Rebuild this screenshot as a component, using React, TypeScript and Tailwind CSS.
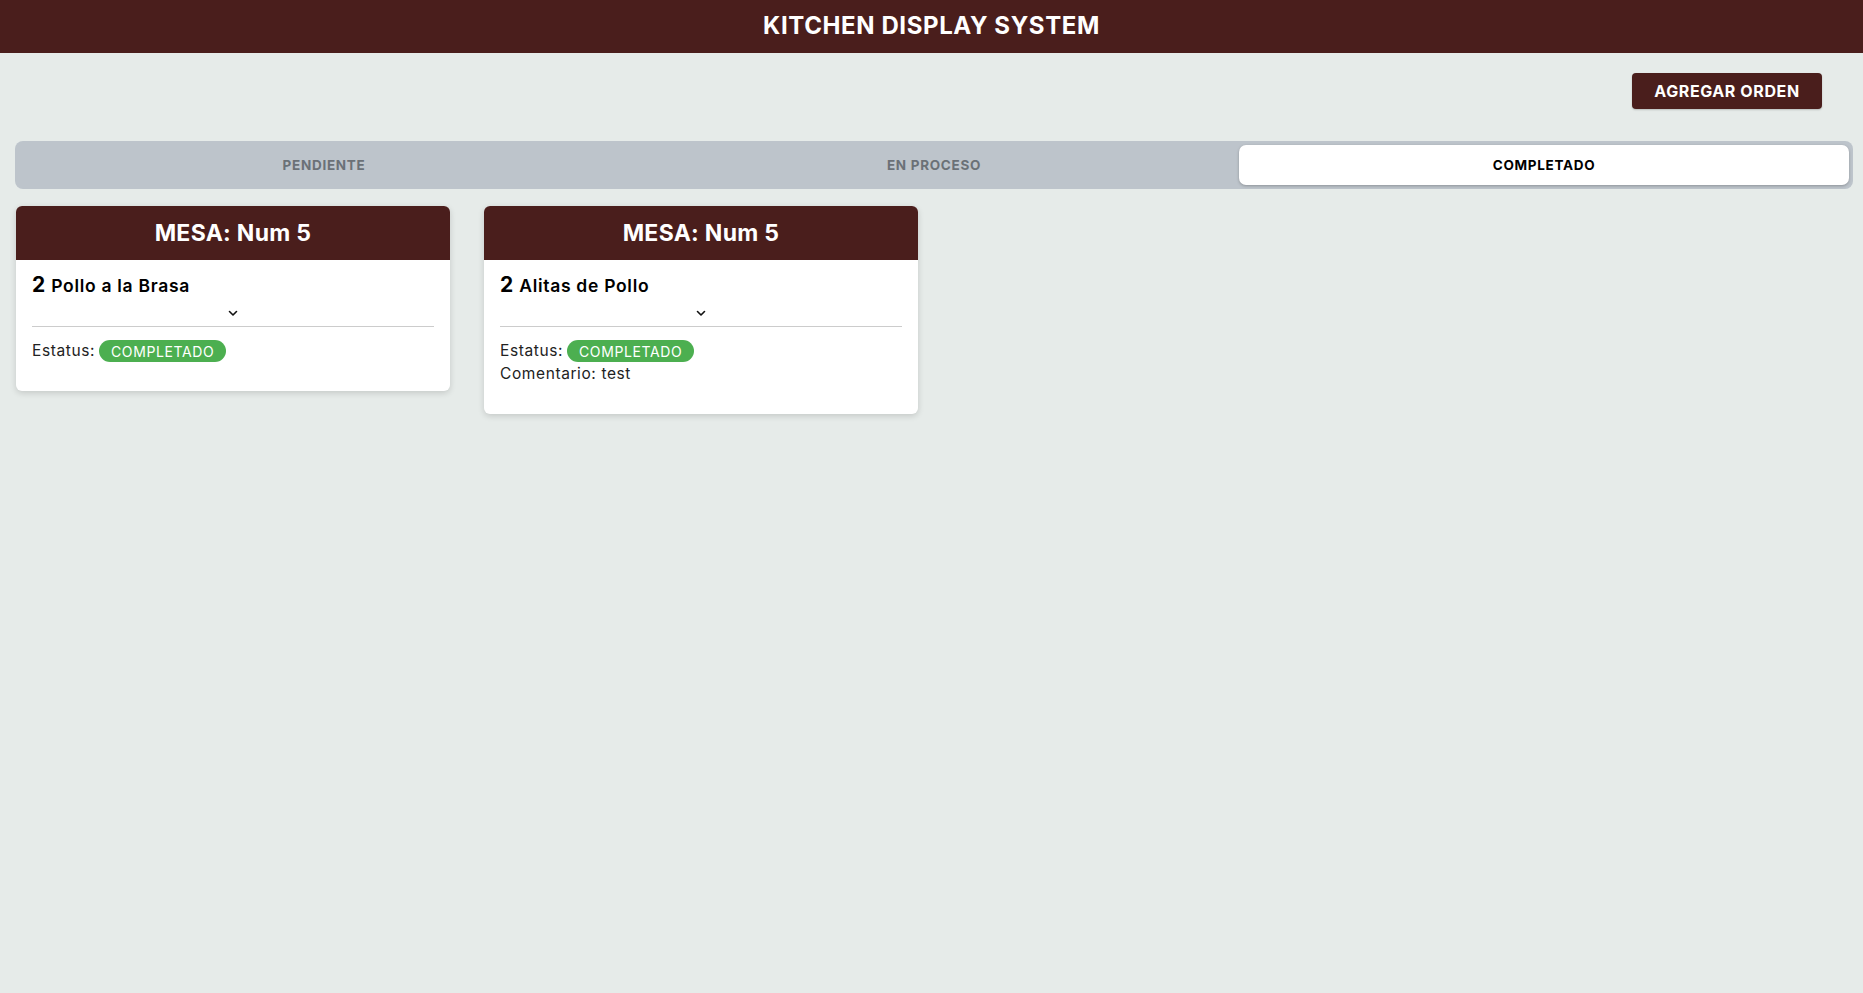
import React from "react";

function Chevron() {
  return (
    <svg width="10" height="7" viewBox="0 0 10 7" fill="none">
      <path d="M1.5 1.5 L5 5 L8.5 1.5" stroke="#111" strokeWidth="1.6" strokeLinecap="round" strokeLinejoin="round" />
    </svg>
  );
}

function Card({ qty, name, comment }: { qty: string; name: string; comment?: string }) {
  return (
    <div className="w-[434px] rounded-[6px] bg-white shadow-[0_2px_6px_rgba(0,0,0,0.15)] overflow-hidden">
      <div className="h-[54px] bg-[#4a1e1c] flex items-center justify-center">
        <span className="text-white font-bold text-[23px] tracking-[0.3px]">MESA: Num 5</span>
      </div>
      <div className="px-[16px] pt-[9px] pb-[29px]">
        <div className="flex items-baseline gap-[6px] h-[26px]">
          <span className="text-[21px] font-bold text-black">{qty}</span>
          <span className="text-[17.5px] font-semibold text-black tracking-[0.7px]">{name}</span>
        </div>
        <div className="flex justify-center h-[20px] items-center mt-[8px]">
          <Chevron />
        </div>
        <div className="border-t border-[#cccccc] mt-[3px]" />
        <div className="mt-[13px] flex items-center h-[22px] text-[15.5px] text-[#222] tracking-[0.6px]">
          <span>Estatus:</span>
          <span className="ml-[4px] h-[22px] px-[12px] rounded-full bg-[#4caf50] text-white text-[14px] tracking-[0.6px] flex items-center">COMPLETADO</span>
        </div>
        {comment && (
          <div className="mt-[1px] h-[22px] flex items-center text-[15.5px] text-[#222] tracking-[0.6px]">Comentario: {comment}</div>
        )}
      </div>
    </div>
  );
}

export default function App() {
  return (
    <div className="min-h-screen bg-[#e6ebe9] font-['Inter',sans-serif]">
      <header className="h-[53px] bg-[#4a1e1c] flex items-center justify-center pb-[2px]">
        <h1 className="text-white font-bold text-[24px] tracking-[0.6px]">KITCHEN DISPLAY SYSTEM</h1>
      </header>
      <div className="flex justify-end pr-[41px] pt-[20px]">
        <button className="w-[190px] h-[36px] rounded-[4px] bg-[#4a1e1c] text-white font-bold text-[16px] tracking-[0.6px] shadow-[0_1px_2px_rgba(0,0,0,0.2)]">
          AGREGAR ORDEN
        </button>
      </div>
      <div className="mt-[32px] ml-[15px] mr-[10px] h-[48px] rounded-[8px] bg-[#bdc4cb] p-[4px] grid grid-cols-3">
        <div className="flex items-center justify-center text-[13.5px] font-bold tracking-[0.7px] text-[#6b7177]">PENDIENTE</div>
        <div className="flex items-center justify-center text-[13.5px] font-bold tracking-[0.7px] text-[#6b7177]">EN PROCESO</div>
        <div className="flex items-center justify-center text-[13.5px] font-bold tracking-[0.7px] text-black bg-white rounded-[7px] shadow-[0_1px_3px_rgba(0,0,0,0.25)]">COMPLETADO</div>
      </div>
      <div className="mt-[17px] pl-[16px] flex gap-[34px] items-start">
        <Card qty="2" name="Pollo a la Brasa" />
        <Card qty="2" name="Alitas de Pollo" comment="test" />
      </div>
    </div>
  );
}
